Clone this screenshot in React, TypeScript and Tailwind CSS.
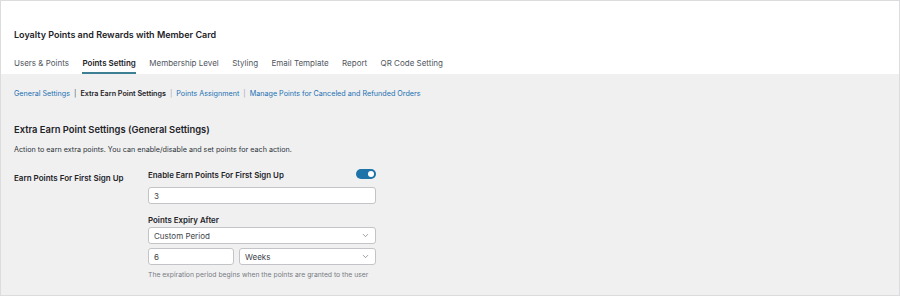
import { ChevronDown } from "lucide-react";

const tabs = [
  "Users & Points",
  "Points Setting",
  "Membership Level",
  "Styling",
  "Email Template",
  "Report",
  "QR Code Setting",
];

function SelectBox({ value, className }: { value: string; className?: string }) {
  return (
    <div
      className={`flex h-[17px] items-center justify-between rounded-[3px] border border-[#c3c4c7] bg-white pl-[5px] pr-[5px] text-[8px] text-[#3c434a] ${className ?? ""}`}
    >
      <span>{value}</span>
      <ChevronDown className="h-[9px] w-[9px] text-[#50575e]" strokeWidth={1.5} />
    </div>
  );
}

export default function App() {
  return (
    <div className="h-[296px] w-[900px] overflow-hidden border border-[#dcdcde] bg-[#f0f0f1] font-['Inter','Liberation_Sans',sans-serif] text-[#1d2327]">
      <header className="h-[73px] bg-white px-[13px] pt-[27px]">
        <h1 className="text-[9px] font-semibold leading-[14px]">
          Loyalty Points and Rewards with Member Card
        </h1>
        <nav className="mt-[12px] flex gap-[13.4px] text-[8px] leading-[18px]">
          {tabs.map((t) => (
            <span
              key={t}
              className={
                t === "Points Setting"
                  ? "border-b-[2px] border-[#3d7f93] font-semibold text-[#1d2327]"
                  : "border-b-[2px] border-transparent text-[#50575e]"
              }
            >
              {t}
            </span>
          ))}
        </nav>
      </header>

      <main className="px-[13px]">
        <div className="mt-[15px] flex items-center gap-[4px] text-[7.2px] leading-[10px]">
          <span className="text-[#2271b1]">General Settings</span>
          <span className="text-[#50575e]">|</span>
          <span className="font-semibold text-[#1d2327]">Extra Earn Point Settings</span>
          <span className="text-[#a7aaad]">|</span>
          <span className="text-[#2271b1]">Points Assignment</span>
          <span className="text-[#a7aaad]">|</span>
          <span className="text-[#2271b1]">Manage Points for Canceled and Refunded Orders</span>
        </div>

        <h2 className="mt-[24px] text-[9.4px] font-semibold leading-[14px]">
          Extra Earn Point Settings (General Settings)
        </h2>
        <p className="mt-[8px] text-[7.2px] leading-[10px] text-[#2c3338]">
          Action to earn extra points. You can enable/disable and set points for each action.
        </p>

        <div className="mt-[13px] flex">
          <div className="w-[134px] pt-[5px] text-[8px] font-semibold leading-[10px]">
            Earn Points For First Sign Up
          </div>
          <div className="w-[228px]">
            <div className="flex items-center justify-between">
              <span className="pt-[2px] text-[7.9px] font-semibold leading-[10px]">
                Enable Earn Points For First Sign Up
              </span>
              <span className="flex h-[10px] w-[20px] items-center justify-end rounded-full bg-[#1e73a8] pr-[2px]">
                <span className="h-[6px] w-[6px] rounded-full bg-white" />
              </span>
            </div>
            <div className="mt-[7px] flex h-[17px] items-center rounded-[3px] border border-[#c3c4c7] bg-white px-[5px] text-[8px] text-[#3c434a]">
              3
            </div>
            <div className="mt-[11px] text-[7.9px] font-semibold leading-[10px]">
              Points Expiry After
            </div>
            <SelectBox value="Custom Period" className="mt-[2px]" />
            <div className="mt-[4px] flex gap-[5px]">
              <div className="flex h-[17px] w-[86px] items-center rounded-[3px] border border-[#c3c4c7] bg-white px-[5px] text-[8px] text-[#3c434a]">
                6
              </div>
              <SelectBox value="Weeks" className="flex-1" />
            </div>
            <p className="mt-[5px] text-[6.8px] leading-[9px] text-[#787c82]">
              The expiration period begins when the points are granted to the user
            </p>
          </div>
        </div>
      </main>
    </div>
  );
}
